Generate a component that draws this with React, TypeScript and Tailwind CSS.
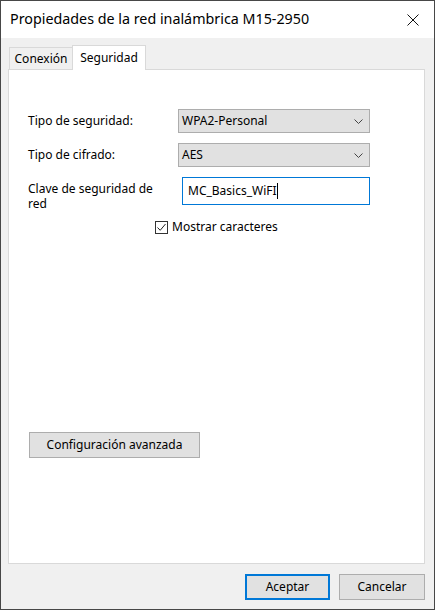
import React from "react";

const font = { fontFamily: '"Noto Sans", "Open Sans", Arial, sans-serif' };

function Chevron() {
  return (
    <svg width="9" height="5" viewBox="0 0 9 5" className="mr-[6px]">
      <path d="M0.5 0.5 L4.5 4.5 L8.5 0.5" fill="none" stroke="#444" strokeWidth="1" />
    </svg>
  );
}

function Select({ value }: { value: string }) {
  return (
    <div className="w-[192px] h-[24px] bg-[#e1e1e1] border border-[#adadad] flex items-center justify-between pl-[3px]">
      <span className="text-[12px] text-black leading-none">{value}</span>
      <Chevron />
    </div>
  );
}

export default function App() {
  return (
    <div
      className="w-[435px] h-[610px] border border-[#474747] bg-[#f0f0f0] flex flex-col text-black"
      style={font}
    >
      {/* title bar */}
      <div className="h-[37px] bg-white flex items-center justify-between pl-[9px] pr-[15px]">
        <span className="text-[14.3px] leading-none">Propiedades de la red inalámbrica M15-2950</span>
        <svg width="12" height="12" viewBox="0 0 12 12">
          <path d="M0.5 0.5 L11.5 11.5 M11.5 0.5 L0.5 11.5" stroke="#111" strokeWidth="1" />
        </svg>
      </div>

      {/* body */}
      <div className="flex-1 flex flex-col pl-[7px] pr-[9px] pt-[7px] pb-[9px]">
        {/* tabs */}
        <div className="flex items-end pl-[1px] h-[25px] -mb-[1px] relative z-10">
          <div className="h-[22px] w-[63px] border-t border-l border-[#d9d9d9] bg-[#f0f0f0] flex items-center justify-center text-[12px] mb-[1px]">
            Conexión
          </div>
          <div className="h-[25px] w-[74px] border-t border-l border-r border-[#d9d9d9] bg-white flex items-start justify-center pt-[3px] text-[12px]">
            Seguridad
          </div>
        </div>

        {/* panel */}
        <div className="h-[495px] border border-[#d9d9d9] bg-white flex flex-col pt-[39px] pl-[19px]">
          <div className="flex items-center h-[24px]">
            <span className="w-[150px] text-[12px]">Tipo de seguridad:</span>
            <Select value="WPA2-Personal" />
          </div>
          <div className="flex items-center h-[24px] mt-[10px]">
            <span className="w-[150px] text-[12px]">Tipo de cifrado:</span>
            <Select value="AES" />
          </div>
          <div className="flex items-start h-[28px] mt-[10px]">
            <span className="w-[130px] text-[12px] leading-[15px] pt-[4px]">Clave de seguridad de red</span>
            <div className="ml-[24px] w-[188px] h-[28px] border border-[#0078d7] bg-white flex items-center pl-[5px]">
              <span className="text-[12px] leading-none">MC_Basics_WiFI</span>
              <span className="w-px h-[16px] bg-black" />
            </div>
          </div>
          <div className="flex items-center h-[16px] mt-[14px] pl-[127px]">
            <div className="w-[13px] h-[13px] border border-[#333] bg-white flex items-center justify-center">
              <svg width="11" height="11" viewBox="0 0 11 11">
                <path d="M1.5 5.5 L4.2 8.3 L9.5 2" fill="none" stroke="#222" strokeWidth="1" />
              </svg>
            </div>
            <span className="text-[12px] ml-[4px]">Mostrar caracteres</span>
          </div>
          <div className="mt-[197px] pl-[1px]">
            <div className="w-[171px] h-[26px] bg-[#e1e1e1] border border-[#adadad] flex items-center justify-center text-[12px]">
              Configuración avanzada
            </div>
          </div>
        </div>

        {/* buttons */}
        <div className="flex justify-end gap-[9px] mt-[10px]">
          <div className="w-[85px] h-[26px] bg-[#e1e1e1] border-2 border-[#0078d7] flex items-center justify-center text-[12px]">
            Aceptar
          </div>
          <div className="w-[86px] h-[26px] bg-[#e1e1e1] border border-[#adadad] flex items-center justify-center text-[12px]">
            Cancelar
          </div>
        </div>
      </div>
    </div>
  );
}
